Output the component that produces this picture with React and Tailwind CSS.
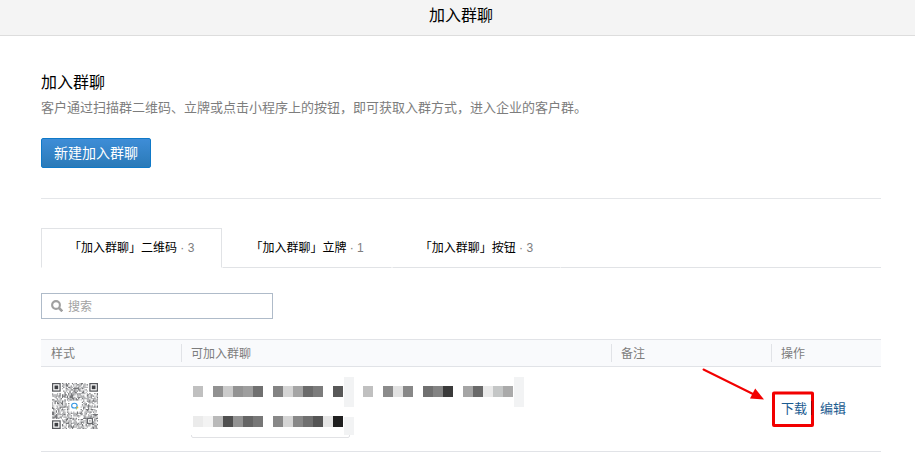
const tabs = [
  { id: 'qrcode', label: '「加入群聊」二维码', count: 3 },
  { id: 'stand', label: '「加入群聊」立牌', count: 1 },
  { id: 'button', label: '「加入群聊」按钮', count: 3 },
];

// [x, y, fill] of every masked block
const mosaic = [
  [2, 9, '#c0c0c0'], [22, 9, '#919191'], [32, 9, '#cbcbcb'], [42, 9, '#939393'], [52, 9, '#9e9e9e'],
  [62, 9, '#707070'], [82, 9, '#838383'], [92, 9, '#d5d5d5'], [102, 9, '#a5a5a5'], [112, 9, '#6b6b6b'],
  [122, 9, '#7c7c7c'], [142, 9, '#585858'],
  [172, 9, '#c0c0c0'], [192, 9, '#8b8b8b'], [202, 9, '#e2e2e2'], [212, 9, '#888888'], [232, 9, '#707070'],
  [242, 9, '#838383'], [252, 9, '#3a3a3a'], [272, 9, '#a5a5a5'], [282, 9, '#696969'], [292, 9, '#eaeaea'],
  [302, 9, '#c4c6c6'], [312, 9, '#aaaaaa'],
  [2, 39, '#ebebeb'], [12, 39, '#f3f3f3'], [22, 39, '#b9b9b9'], [32, 39, '#505050'], [42, 39, '#939393'],
  [52, 39, '#656565'], [62, 39, '#777777'], [82, 39, '#888888'], [92, 39, '#d5d5d5'], [102, 39, '#888888'],
  [112, 39, '#707070'], [122, 39, '#555555'], [132, 39, '#e5e5e5'], [142, 39, '#1f1f1f'],
];

const QR_SIZE = 37;

// two tones: dark modules and the paler ones between them
function qrPaths() {
  let seed = 20;
  const paths = { dark: '', pale: '' };
  for (let y = 0; y < QR_SIZE; y++) {
    for (let x = 0; x < QR_SIZE; x++) {
      seed = (seed * 1103515245 + 12345) % 2147483648;
      const value = seed / 2147483648;
      const finder = (x < 8 && y < 8) || (x > 28 && y < 8) || (x < 8 && y > 28);
      const align = x > 27 && x < 33 && y > 27 && y < 33;
      const logo = x > 13 && x < 23 && y > 13 && y < 23;
      if (finder || align || logo || value > 0.62) continue;
      paths[value < 0.3 ? 'dark' : 'pale'] += `M${x} ${y}h1v1h-1z`;
    }
  }
  return paths;
}

const modules = qrPaths();

function QrCode() {
  return (
    <svg className="h-[46px] w-[46px]" viewBox="0 0 37 37" role="img" aria-label="二维码">
      <path d={modules.dark} fill="#77787b" />
      <path d={modules.pale} fill="#b4b5b7" />
      {[[0, 0], [30, 0], [0, 30]].map(([x, y]) => (
        <g key={`${x}-${y}`} transform={`translate(${x} ${y})`}>
          <rect x="0.5" y="0.5" width="6" height="6" fill="#fff" stroke="#55575b" />
          <rect x="2" y="2" width="3" height="3" fill="#3d3f43" />
        </g>
      ))}
      <rect x="28.5" y="28.5" width="4" height="4" fill="#fff" stroke="#66686c" />
      <rect x="30" y="30" width="1" height="1" fill="#66686c" />
      <ellipse cx="18" cy="18.2" rx="2.2" ry="1.9" fill="#fff" stroke="#3497e4" strokeWidth="0.9" />
      <circle cx="20.4" cy="19.8" r="0.8" fill="#e9b93c" />
      <circle cx="19.6" cy="20.8" r="0.5" fill="#5cb85c" />
    </svg>
  );
}

function MaskedGroups() {
  return (
    <svg className="h-[61px] w-[333px]" viewBox="0 0 333 61" aria-hidden="true">
      {mosaic.map(([x, y, fill]) => (
        <rect key={`${x}-${y}`} x={x} y={y} width="10" height="11" fill={fill} />
      ))}
      <rect x="153" y="0" width="10" height="30" fill="#f2f3f4" />
      <rect x="323" y="0" width="10" height="30" fill="#f2f3f4" />
      <rect x="153" y="40" width="10" height="18" fill="#f2f3f4" />
      <path d="M0.5 58v1q0 1.5 1.5 1.5h155q1.500 0 1.500-1.500v-1" fill="none" stroke="#e1e2e5" />
    </svg>
  );
}

function SearchIcon() {
  return (
    <svg className="h-3 w-3 shrink-0" viewBox="0 0 12 12" fill="none" stroke="#a0a0a0" strokeWidth="2.1" aria-hidden="true">
      <circle cx="5" cy="5" r="3.900" />
      <path d="M8 8l3.300 3.300" strokeWidth="2.600" />
    </svg>
  );
}

function HeadCell({ width, divided = true, children }) {
  return (
    <th className={`${width} h-[28px] border-y border-[#e1e3e7] p-0 text-left font-normal`}>
      <div className={`h-[18px] border-l pl-[9px] leading-5 ${divided ? 'border-[#e1e3e7]' : 'border-transparent'}`}>
        {children}
      </div>
    </th>
  );
}

export default function App() {
  return (
    <div className="bg-white font-['Liberation_Sans','Noto_Sans_CJK_SC',sans-serif] text-black">
      <header className="h-9 border-b border-[#dddddd] bg-[#f4f4f4] pt-1 pl-[7px] text-center text-base leading-6">
        加入群聊
      </header>

      <main className="pt-[35px] pr-[34px] pl-[41px]">
        <section className="border-b border-[#e4e6e9] pb-[30px]">
          <h1 className="text-base leading-6">加入群聊</h1>
          <p className="mt-[3px] text-[13px] leading-5 text-[#7d7d7d]">
            客户通过扫描群二维码、立牌或点击小程序上的按钮，即可获取入群方式，进入企业的客户群。
          </p>
          <button
            type="button"
            className="mt-5 block h-[30px] rounded-xs border border-[#0f79c8] bg-linear-to-b from-[#3e8dd7] to-[#2a7ab8] px-3 text-sm leading-7 text-white"
          >
            新建加入群聊
          </button>
        </section>

        <div className="mt-[29px] flex h-10 text-xs" role="tablist">
          {tabs.map((tab, index) => (
            <button
              key={tab.id}
              type="button"
              role="tab"
              aria-selected={index === 0}
              className={`border px-[27px] whitespace-nowrap ${
                index === 0
                  ? 'border-[#e1e3e6] border-b-transparent'
                  : 'border-transparent border-b-[#e1e3e6]'
              }`}
            >
              {tab.label}
              <span className="text-[#7d7d7d]"> · {tab.count}</span>
            </button>
          ))}
          <div className="flex-1 border-b border-[#e1e3e6]" />
        </div>

        <label className="mt-[25px] flex h-[26px] w-[232px] items-center gap-[5px] border border-[#afbbc9] pr-2 pl-[9px]">
          <SearchIcon />
          <input
            type="text"
            aria-label="搜索"
            placeholder="搜索"
            className="h-6 min-w-0 flex-1 pt-0.5 text-xs outline-none placeholder:text-[#a2a2a2]"
          />
        </label>

        <table className="mt-5 w-full table-fixed border-separate border-spacing-0">
          <thead className="bg-[#f9fafc] text-xs text-[#7d7d7d]">
            <tr>
              <HeadCell width="w-[140px]" divided={false}>样式</HeadCell>
              <HeadCell width="w-auto">可加入群聊</HeadCell>
              <HeadCell width="w-[160px]">备注</HeadCell>
              <HeadCell width="w-[110px]">操作</HeadCell>
            </tr>
          </thead>
          <tbody>
            <tr className="h-[85px] align-top">
              <td className="border-b border-[#e1e3e7] pt-4 pl-[11px]">
                <QrCode />
              </td>
              <td className="border-b border-[#e1e3e7] pt-[10px] pl-[10px]">
                <MaskedGroups />
              </td>
              <td className="border-b border-[#e1e3e7]" />
              <td className="relative border-b border-[#e1e3e7] pt-8 pl-[10px] text-[13px] leading-5 text-[#1b5b90]">
                <div className="flex items-center">
                  <a href="#download">下载</a>
                  <span className="ml-1 h-[14px] w-px bg-[#555555]" />
                  <a href="#edit" className="ml-2">编辑</a>
                </div>
                <svg
                  className="pointer-events-none absolute top-0 -left-[71px] h-[62px] w-[116px]"
                  viewBox="0 0 116 62"
                  fill="none"
                  stroke="#f20000"
                  aria-hidden="true"
                >
                  <path d="M3.500 2.500L54 27.500" strokeWidth="2" strokeLinecap="round" />
                  <path d="M64 32.500L55.200 21.500L50 31.500z" fill="#f20000" stroke="none" />
                  <rect x="73.500" y="26" width="39" height="32.500" rx="0.5" strokeWidth="3" />
                  <path d="M111.500 34v14" stroke="#8f0508" />
                </svg>
              </td>
            </tr>
          </tbody>
        </table>
      </main>
    </div>
  );
}
